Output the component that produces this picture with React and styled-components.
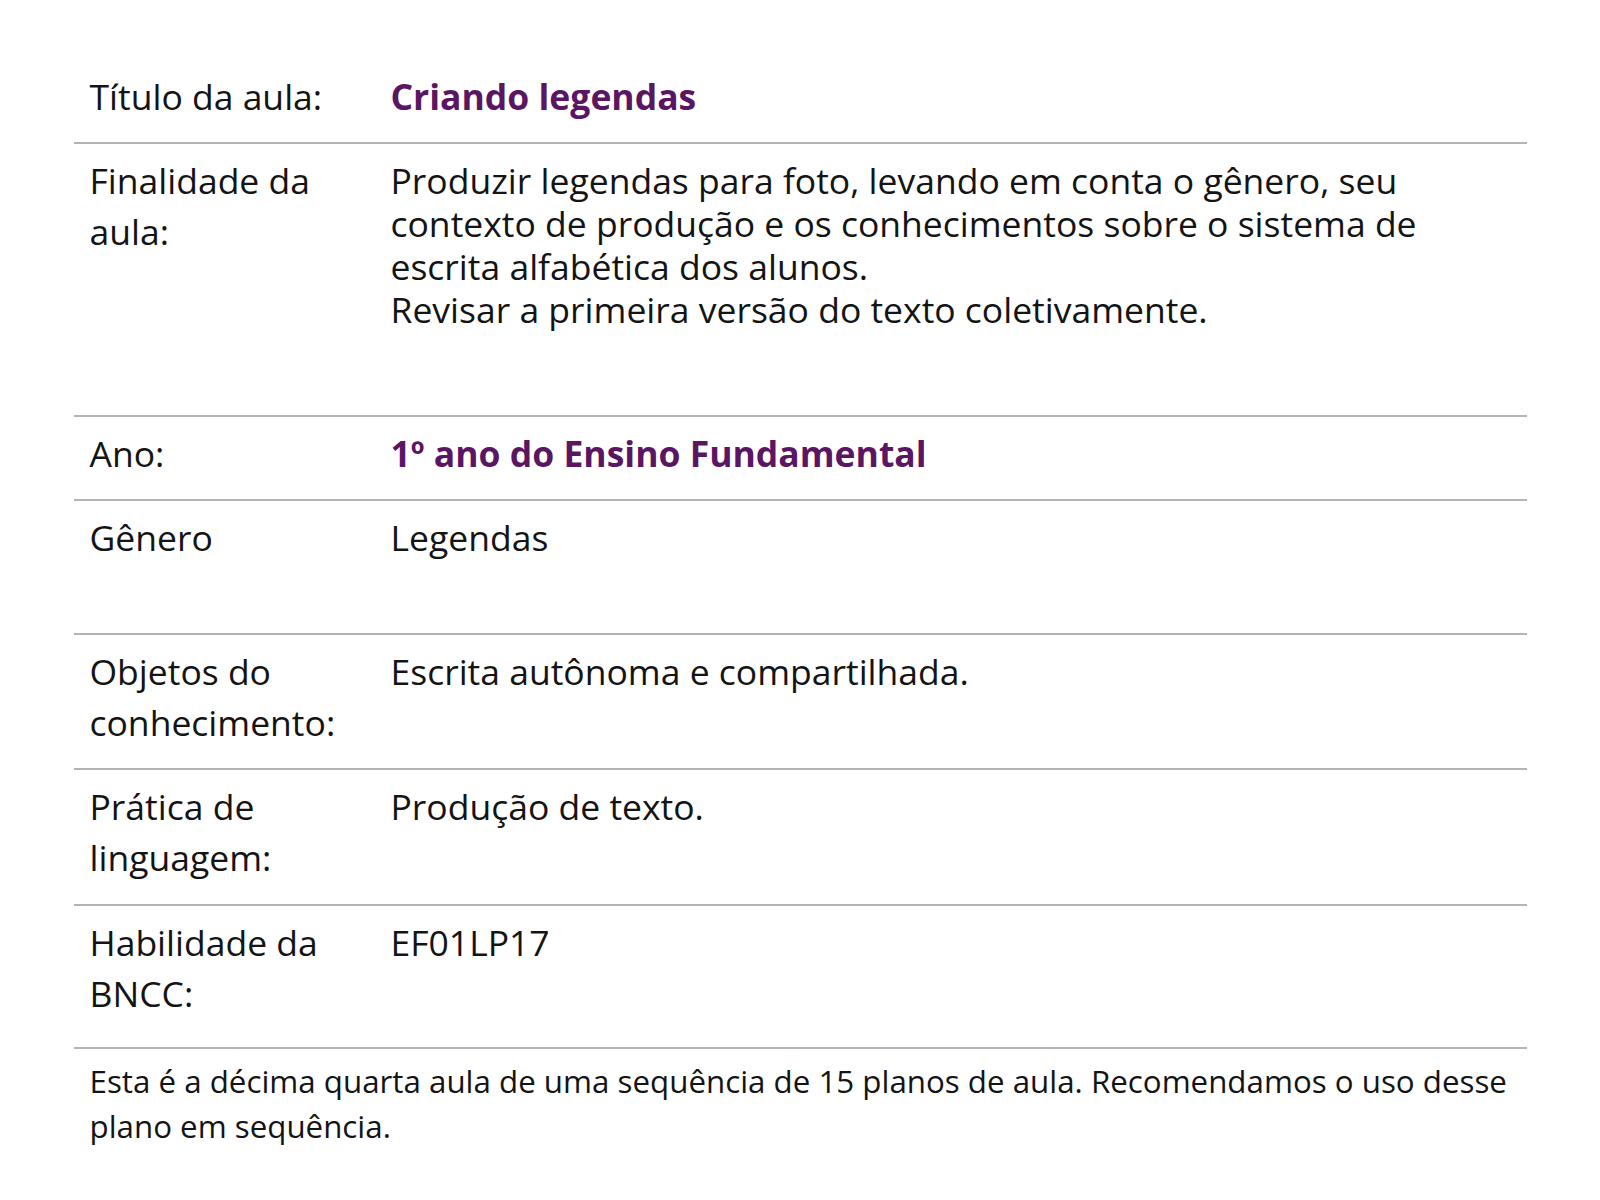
import styled, { createGlobalStyle } from 'styled-components';

const GlobalStyle = createGlobalStyle`
  body{
    margin: 0;
    background: #ffffff;
    font-family: "Open Sans", "Noto Sans", sans-serif;
    color: #141414;
  }
`;

const Page = styled.main`
  width: 1453px;
  margin: 0 auto;
  padding-block-start: 60px;
`;

const Row = styled.section`
  display: grid;
  grid-template-columns: 300px 1fr;
  box-sizing: border-box;
  min-height: ${({ $height }) => $height}px;
  border-bottom: 2px solid #b4b4b4;
`;

const Label = styled.div`
  padding: 11px 16px 0 16px;
  font-size: 35.5px;
  line-height: 51px;
`;

const Value = styled.div`
  padding: 15px 18px 0 17px;
  font-size: 35.5px;
  line-height: 43px;
  font-weight: ${({ $strong }) => ($strong ? 700 : 400)};
  color: ${({ $strong }) => ($strong ? '#5a1663' : '#141414')};

  p{
    margin: 0;
  }
`;

const Note = styled.p`
  margin: 0;
  padding: 10px 0 0 16px;
  font-size: 31.3px;
  line-height: 45px;
`;

const rows = [
  { label: 'Título da aula:', value: ['Criando legendas'], strong: true, height: 84 },
  {
    label: 'Finalidade da aula:',
    value: [
      'Produzir legendas para foto, levando em conta o gênero, seu contexto de produção e os conhecimentos sobre o sistema de escrita alfabética dos alunos.',
      'Revisar a primeira versão do texto coletivamente.',
    ],
    height: 273,
  },
  { label: 'Ano:', value: ['1º ano do Ensino Fundamental'], strong: true, height: 84 },
  { label: 'Gênero', value: ['Legendas'], height: 134 },
  { label: 'Objetos do conhecimento:', value: ['Escrita autônoma e compartilhada.'], height: 135 },
  { label: 'Prática de linguagem:', value: ['Produção de texto.'], height: 136 },
  { label: 'Habilidade da BNCC:', value: ['EF01LP17'], height: 143 },
];

function App() {
  return (
    <Page>
      <GlobalStyle />
      {rows.map((row) => (
        <Row key={row.label} $height={row.height}>
          <Label>{row.label}</Label>
          <Value $strong={row.strong}>
            {row.value.map((text) => (
              <p key={text}>{text}</p>
            ))}
          </Value>
        </Row>
      ))}
      <Note>
        Esta é a décima quarta aula de uma sequência de 15 planos de aula. Recomendamos o uso desse plano em sequência.
      </Note>
    </Page>
  );
}

export default App;
